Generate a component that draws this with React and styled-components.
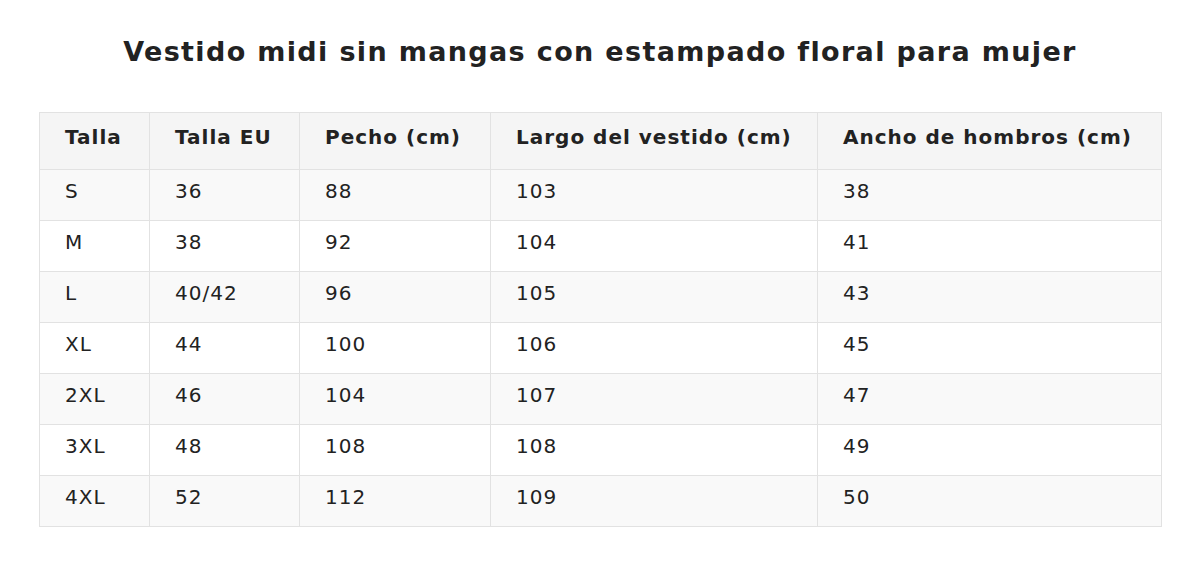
import React from "react";
import styled, { createGlobalStyle } from "styled-components";

const Global = createGlobalStyle`
  html, body { margin: 0; padding: 0; background: #fff; }
  body { font-family: "DejaVu Sans", Verdana, sans-serif; color: #222; }
`;

const Page = styled.div`
  width: 1200px;
  padding: 0 39px;
  box-sizing: border-box;
`;

const Title = styled.h1`
  margin: 0;
  padding-top: 36px;
  height: 112px;
  box-sizing: border-box;
  text-align: center;
  font-size: 27px;
  font-weight: bold;
  letter-spacing: 0.05em;
  color: #222;
  line-height: 32px;
`;

const Table = styled.table`
  width: 1122px;
  table-layout: fixed;
  border-collapse: collapse;
  font-size: 20px;
  letter-spacing: 1px;
  color: #222;
`;

const Col = styled.col`
  width: ${(p) => p.$w}px;
`;

const Th = styled.th`
  text-align: left;
  font-weight: bold;
  background: #f5f5f5;
  border: 1px solid #e2e2e2;
  padding: 12px 0 20px 25px;
  line-height: 24px;
  white-space: nowrap;
`;

const Tr = styled.tr`
  background: ${(p) => (p.$odd ? "#f9f9f9" : "#ffffff")};
`;

const Td = styled.td`
  border: 1px solid #e2e2e2;
  padding: 9px 0 17px 25px;
  line-height: 24px;
  white-space: nowrap;
`;

const cols = [
  ["Talla", 110],
  ["Talla EU", 150],
  ["Pecho (cm)", 191],
  ["Largo del vestido (cm)", 327],
  ["Ancho de hombros (cm)", 344],
];

const rows = [
  ["S", "36", "88", "103", "38"],
  ["M", "38", "92", "104", "41"],
  ["L", "40/42", "96", "105", "43"],
  ["XL", "44", "100", "106", "45"],
  ["2XL", "46", "104", "107", "47"],
  ["3XL", "48", "108", "108", "49"],
  ["4XL", "52", "112", "109", "50"],
];

export default function App() {
  return (
    <Page>
      <Global />
      <Title>Vestido midi sin mangas con estampado floral para mujer</Title>
      <Table>
        <colgroup>
          {cols.map(([c, w]) => (
            <Col key={c} $w={w} />
          ))}
        </colgroup>
        <thead>
          <tr>
            {cols.map(([c]) => (
              <Th key={c}>{c}</Th>
            ))}
          </tr>
        </thead>
        <tbody>
          {rows.map((r, i) => (
            <Tr key={r[0]} $odd={i % 2 === 0}>
              {r.map((v, j) => (
                <Td key={j}>{v}</Td>
              ))}
            </Tr>
          ))}
        </tbody>
      </Table>
    </Page>
  );
}
